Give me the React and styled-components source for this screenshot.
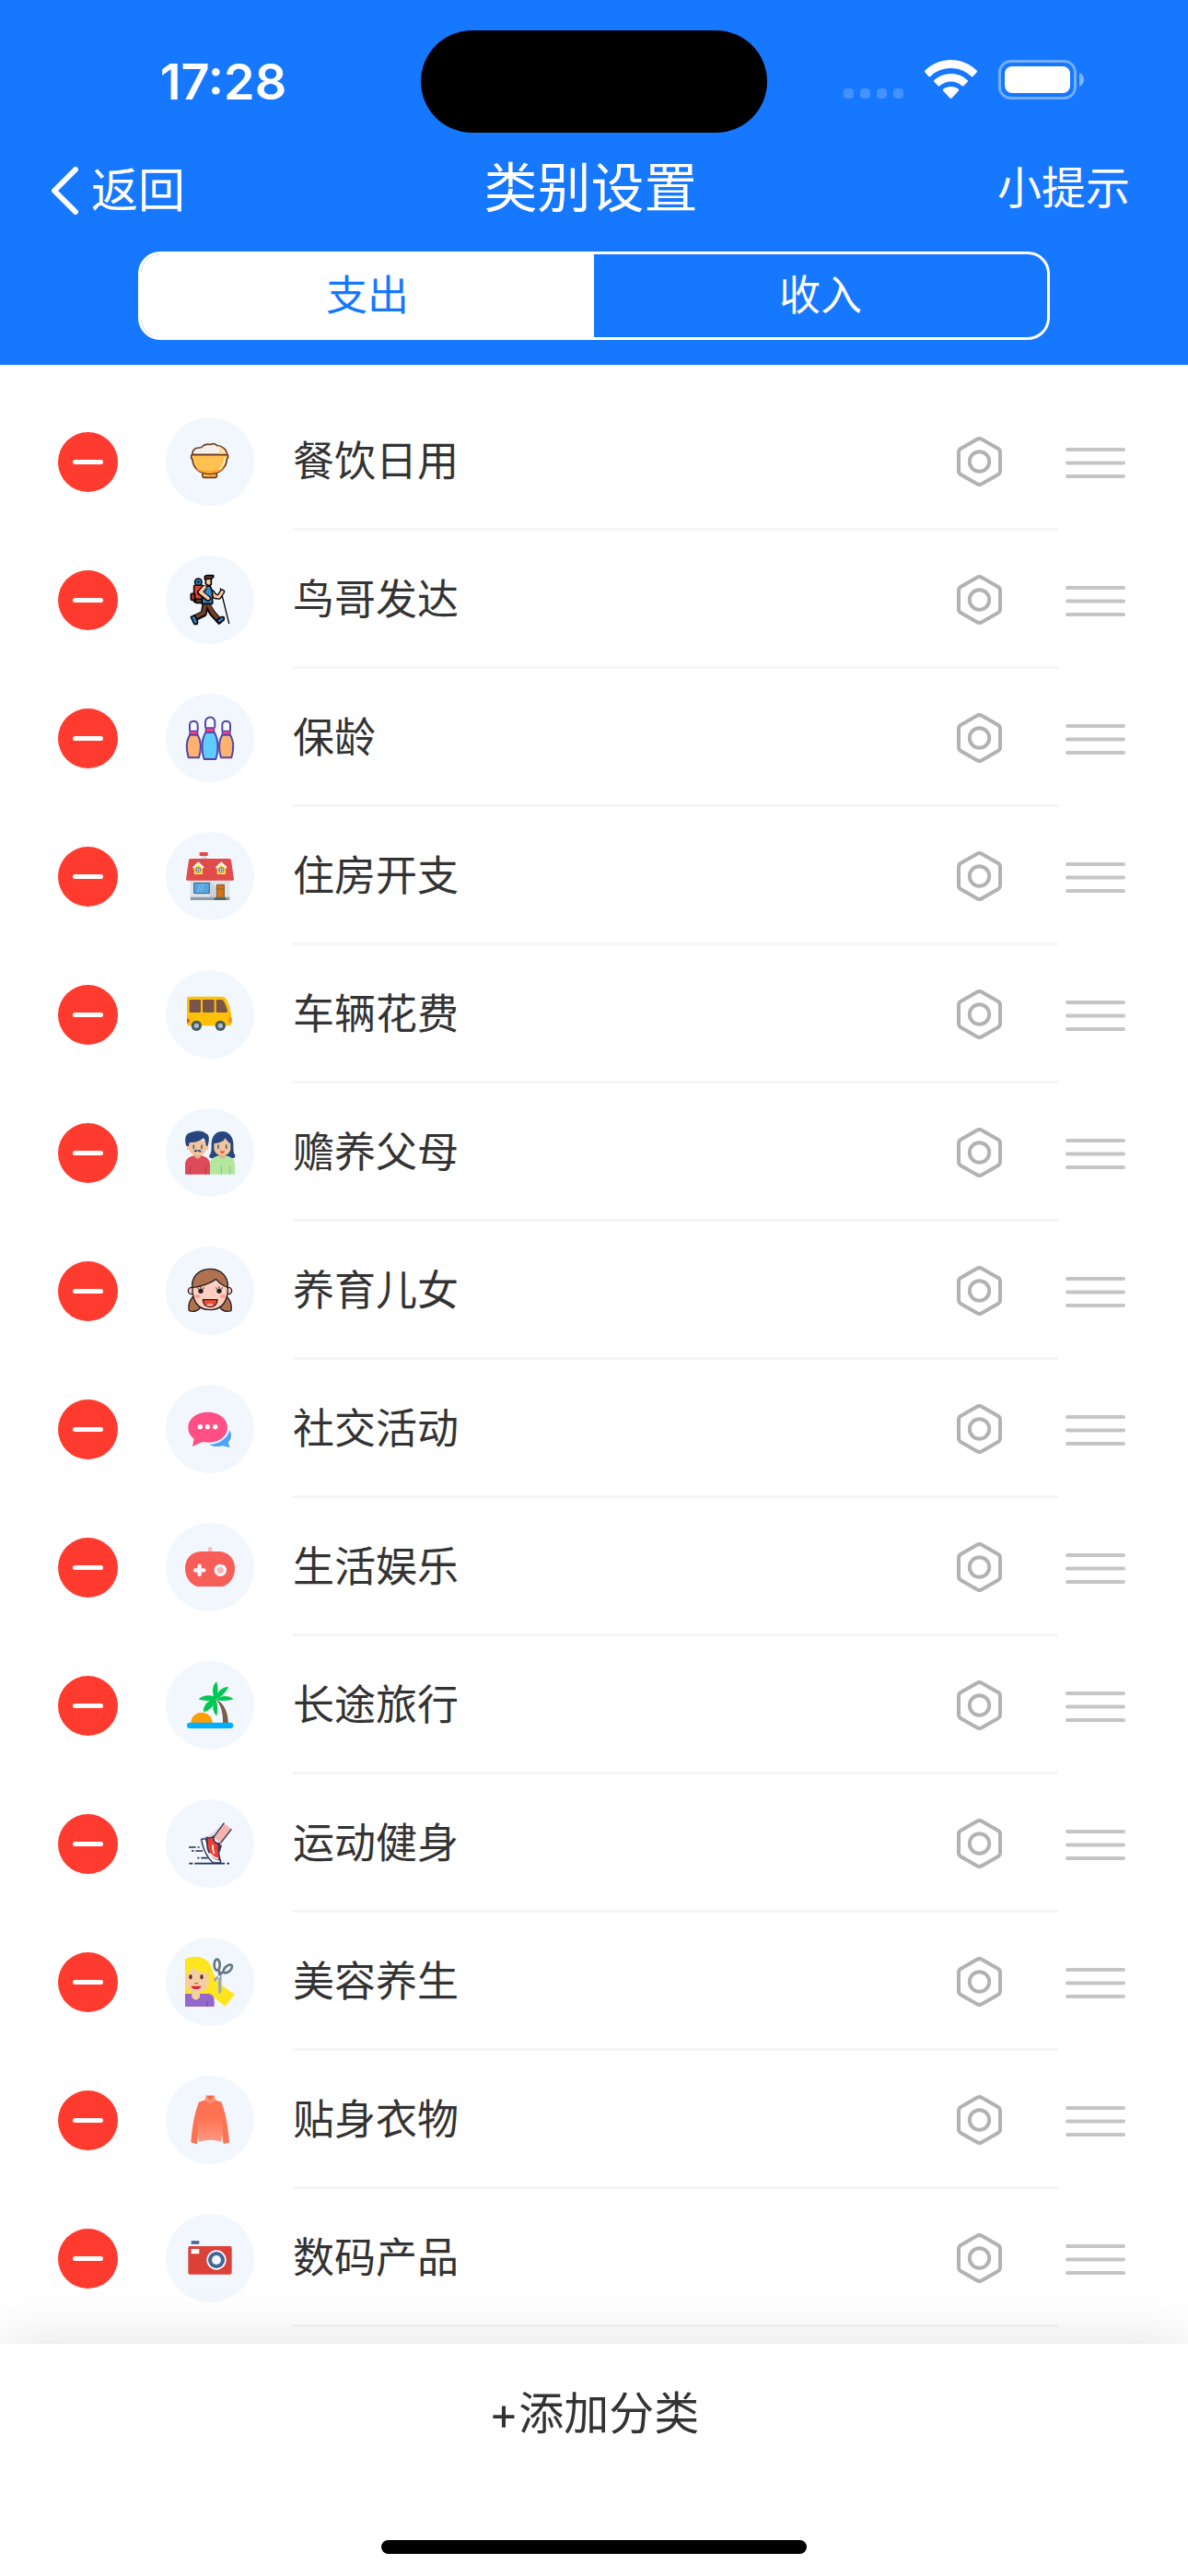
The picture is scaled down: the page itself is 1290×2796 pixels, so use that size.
import { useState } from 'react';
import styled, { createGlobalStyle } from 'styled-components';

const GlobalStyle = createGlobalStyle`
  *, *::before, *::after { box-sizing: border-box; }
  body {
    margin: 0;
    background: #fff;
    color: #333;
    font-family: Inter, "Noto Sans CJK SC", sans-serif;
  }
  button {
    margin: 0;
    padding: 0;
    border: 0;
    background: none;
    color: inherit;
    font: inherit;
    cursor: pointer;
  }
  svg { display: block; }
`;

/* category pictures, all drawn on the 288 x 288 badge grid */

function RiceBowl() {
  return (
    <g stroke="#6d3b20" strokeWidth="5" strokeLinejoin="round">
      <path d="M120 180h46v13q0 3-4 3h-38q-4 0-4-3z" fill="#ffb43c" />
      <path d="M88 122c-3-14 6-24 22-23 9 1 10-9 20-10 8-4 12 1 18-1 8-4 14-1 18 3 18 3 33 14 34 31z" fill="#f5f1ec" />
      <path d="M170 92c14 5 26 16 28 28h-26c3-10 3-20-2-28z" fill="#ffdca0" stroke="none" />
      <path d="M84 122h118q3 10-3 14c-1 30-25 48-56 48-32 0-54-18-56-46-5-4-5-10-3-16z" fill="#ffc14f" />
      <path d="M96 164c20 12 70 14 96-2-10 13-26 20-49 20-22 0-38-6-47-18z" fill="#ffa935" stroke="none" />
      <path d="M193 133c-1 12-3 18-9 25M180 163l-4 4" stroke="#fff" strokeWidth="4" strokeLinecap="round" fill="none" />
      <path d="M112 109h2M126 101h2M140 109h2M152 99h2M127 113h2M160 112h2" stroke="#d8c7b4" strokeWidth="3" />
    </g>
  );
}

function Hiker() {
  return (
    <g stroke="#050505" strokeWidth="5" strokeLinejoin="round" strokeLinecap="round" fill="none">
      <path d="M178 108l28 113" strokeWidth="4" />
      <path d="M128 164l-4 25-28 14M138 164l14 24 22 24" strokeWidth="21" />
      <path d="M128 162l-4 25-28 14M140 162l12 24 20 21" stroke="#70402a" strokeWidth="12" />
      <path d="M82 200l12-6 10 22-2 7h-9z" fill="#3288cc" />
      <path d="M167 210l16-11 7 3-1 8-17 12z" fill="#3288cc" />
      <rect x="92" y="96" width="30" height="56" rx="6" fill="#dc4536" />
      <rect x="82" y="124" width="13" height="21" rx="3" fill="#b93429" />
      <path d="M94 142h26v12h-20z" fill="#70402a" />
      <circle cx="106" cy="86" r="11" fill="#3288cc" />
      <circle cx="106" cy="86" r="3" strokeWidth="3" />
      <path d="M151 120l10 13 12 2 11-17" strokeWidth="17" />
      <path d="M151 120l10 13 12 2 11-17" stroke="#fdc9a0" strokeWidth="9" />
      <path d="M120 102l24-4 8 20v39h-34z" fill="#3288cc" />
      <path d="M124 107l-12 13 26 20" strokeWidth="19" />
      <path d="M126 104l-13 15 25 20" stroke="#fdc9a0" strokeWidth="11" />
      <path d="M130 74h18v20q-3 4-9 4l-9-6z" fill="#fdc9a0" />
      <path d="M127 77v-8q3-5 9-4h19v5l-6 5z" fill="#70402a" />
    </g>
  );
}

function SidePin({ x }) {
  return (
    <g transform={`translate(${x} 0)`}>
      <path d="M10 120v-19a13 12 0 0 1 26 0v19" fill="#f8f9ff" />
      <path d="M10 121h26v13H10z" fill="#f43b86" strokeWidth="4" />
      <path d="M10 134h26c12 20 11 50 4 74H6C-1 184-2 154 10 134z" fill="#ffb26f" />
    </g>
  );
}

function BowlingPins() {
  return (
    <g stroke="#5146a6" strokeWidth="6" strokeLinejoin="round">
      <SidePin x={68} />
      <SidePin x={174} />
      <path d="M129 110V92a15 15 0 0 1 31 0v18" fill="#f8f9ff" />
      <path d="M130 111h28v15h-28z" fill="#f43b86" strokeWidth="4" />
      <path d="M130 126h28c14 22 15 60 5 87h-38c-10-27-9-65 5-87z" fill="#60cbff" />
    </g>
  );
}

function Dormer({ x }) {
  return (
    <g transform={`translate(${x} 0)`}>
      <path d="M-14 114L0 101l14 13v24h-28z" fill="#ffdb3e" />
      <path d="M-17 117L0 101l17 16" fill="none" stroke="#fff" strokeWidth="6" />
      <circle cy="124" r="9" fill="#35454f" />
      <path d="M-9 121H9M-9 127H9M-3 115v18M3 115v18" stroke="#fff" strokeWidth="2" />
    </g>
  );
}

function House() {
  return (
    <g>
      <path d="M116 76h17v14h-17z" fill="#d7dde2" />
      <path d="M110 66h27v12h-27z" fill="#df4b4c" />
      <path d="M80 155h128v58H80z" fill="#dce5ec" />
      <path d="M142 155l20 25v32h-20z" fill="#c8d3db" />
      <path d="M80 212h128v10H80z" fill="#8b9da6" />
      <path d="M80 87h127q5 0 6 5l9 62q0 4-4 4H70q-4 0-4-4l9-62q1-5 5-5z" fill="#e14b4b" />
      <Dormer x={106} />
      <Dormer x={181} />
      <path d="M92 166h50v34H92z" fill="#55a5e2" stroke="#455d6d" strokeWidth="3" />
      <path d="M103 197l10-28M113 197l10-28" stroke="#86c2ef" strokeWidth="3" />
      <path d="M166 172h24v42h-24z" fill="#cf761b" stroke="#8b4a15" strokeWidth="3" />
      <path d="M166 186h24" stroke="#8b4a15" strokeWidth="2" />
      <path d="M160 213h34l4 9h-41z" fill="#53646d" />
    </g>
  );
}

function Bus() {
  return (
    <g>
      <path d="M77 86h106q10 0 15 9c9 18 16 42 16 66v10q0 10-10 10H77q-8 0-8-8V94q0-8 8-8z" fill="#ffc107" />
      <g fill="#795548">
        <rect x="77" y="96" width="37" height="42" rx="4" />
        <rect x="120" y="96" width="38" height="42" rx="4" />
        <path d="M168 96h13q5 0 8 5c5 9 9 20 12 31q1 6-4 6h-29q-4 0-4-4v-34q0-4 4-4z" />
      </g>
      <path d="M69 158h3q5 0 5 6v2q0 6-5 6h-3z" fill="#f63d1c" />
      <rect x="204" y="153" width="11" height="18" rx="5" fill="#ff8a00" />
      <circle cx="100" cy="181" r="17" fill="#455a64" />
      <circle cx="100" cy="181" r="8" fill="#b0bec5" />
      <circle cx="178" cy="181" r="17" fill="#455a64" />
      <circle cx="178" cy="181" r="8" fill="#b0bec5" />
    </g>
  );
}

function Parents() {
  return (
    <g>
      <path d="M148 162c-8 0-8-10-2-14 4-10 2-22 3-36 2-24 16-37 35-37s34 14 36 38c1 14-1 26 3 35 5 5 4 14-3 14-12 3-60 3-72 0z" fill="#26467f" />
      <path d="M63 215v-32q0-20 21-27l12-4h16l12 4q20 7 20 27v32z" fill="#dd4b58" />
      <path d="M144 215v-32q0-20 21-27l11-4h16l12 4q21 7 21 27v32z" fill="#b3e79e" />
      <path d="M79 188v27M130 188v27" stroke="#b83549" strokeWidth="3" />
      <path d="M181 188v27M209 188v27" stroke="#72c3a0" strokeWidth="3" />
      <path d="M93 144h22v12q-11 16-22 0zM173 144h22v12q-11 16-22 0z" fill="#e0b186" />
      <circle cx="75" cy="129" r="7" fill="#f0c59b" />
      <circle cx="133" cy="129" r="7" fill="#f0c59b" />
      <path d="M76 104h56v24c0 18-14 26-28 26s-28-8-28-26z" fill="#f0c59b" />
      <path d="M157 115q30-3 37-18 7 13 17 18v15c0 16-12 24-26 24s-28-8-28-24z" fill="#f0c59b" />
      <path d="M67 123C60 100 62 80 86 77c16-6 36-5 44 5 12 3 13 18 7 40h-6c0-10-2-18-8-25-11 10-28 15-46 14l-2 12z" fill="#26467f" />
      <path d="M91 121v9M117 121v9M171 120v10M197 120v10" stroke="#456276" strokeWidth="5" strokeLinecap="round" />
      <path d="M92 141c2-8 10-6 12-3 3-4 11-4 12 4-6 1-8-1-12-3-4 3-8 4-12 2z" fill="#26467f" />
      <path d="M177 136q8 8 15 0-2 11-8 11t-7-11z" fill="#e64250" />
    </g>
  );
}

function Girl() {
  return (
    <g stroke="#26211f" strokeWidth="4" strokeLinejoin="round">
      <path d="M88 163c-10 12-16 28-12 46 12 4 26 1 36-9zM200 163c10 12 16 28 13 46-12 4-26 1-36-9z" fill="#b07151" />
      <circle cx="84" cy="144" r="11" fill="#ffcfc3" />
      <circle cx="204" cy="144" r="11" fill="#ffcfc3" />
      <path d="M87 130c0-36 25-56 57-56s58 20 58 56c2 44-16 76-58 76s-59-32-57-76z" fill="#ffcfc3" />
      <path d="M86 134c-3-34 21-61 58-61s60 26 58 60q-24-8-38-27-30 21-78 28z" fill="#b07151" />
      <g stroke="none">
        <ellipse cx="114" cy="145" rx="8" ry="8" fill="#26211f" />
        <ellipse cx="174" cy="145" rx="8" ry="8" fill="#26211f" />
        <ellipse cx="103" cy="162" rx="9" ry="6" fill="#ff9c94" />
        <ellipse cx="186" cy="162" rx="9" ry="6" fill="#ff9c94" />
      </g>
      <path d="M106 138l-2-4M114 136v-5M122 138l2-4M166 138l-2-4M174 136v-5M182 138l2-4" strokeLinecap="round" strokeWidth="3" />
      <path d="M121 173h47c0 14-10 24-24 24s-23-10-23-24z" fill="#ef4d2f" />
      <path d="M131 192q13-14 26 0-13 6-26 0z" fill="#ff9c94" stroke="none" />
    </g>
  );
}

function Chat() {
  return (
    <g>
      <path d="M141 195c34-1 60-20 67-47 9 15 5 31-5 40l6 17-22-6c-16 4-35 2-46-4z" fill="#4aa3ff" />
      <path d="M137 89c36 0 64 22 64 50 0 29-27 49-60 49-9 0-16-1-22-2l-32 15 5-25c-12-9-19-21-19-37 0-28 28-50 64-50z" fill="#ff4f86" />
      <g fill="#fff">
        <circle cx="112" cy="137" r="8" />
        <circle cx="136" cy="137" r="8" />
        <circle cx="161" cy="137" r="8" />
      </g>
    </g>
  );
}

function Gamepad() {
  return (
    <g>
      <rect x="138" y="78" width="13" height="25" rx="6" fill="#fbb7b4" />
      <path d="M116 93h56c32 0 53 24 53 55 0 28-16 53-40 59h-82c-24-6-40-31-40-59 0-31 21-55 53-55z" fill="#f65e57" />
      <path d="M110 140v28M96 154h28" stroke="#f2f7fe" strokeWidth="13" strokeLinecap="round" />
      <circle cx="178" cy="154" r="20" fill="#f2f7fe" />
      <circle cx="178" cy="154" r="11" fill="#fbb7b4" />
    </g>
  );
}

function Palm() {
  return (
    <g>
      <path d="M82 202a35 35 0 0 1 70 0z" fill="#ff9d00" />
      <path d="M164 125c24 10 38 36 40 77h-18c1-34-6-58-22-77z" fill="#79604a" />
      <g fill="#00c853">
        <path d="M160 124c-10-20-10-46 6-57 5 18 5 38-1 57z" />
        <path d="M162 124c2-20 18-39 42-41-7 18-22 33-42 41z" />
        <path d="M163 126c14-15 42-17 58-2-18 6-38 7-58 2z" />
        <path d="M167 122c-14-14-44-14-60 2 18 7 40 7 60-2z" />
        <path d="M164 125c-22-2-44 18-41 41 20-6 34-20 41-41z" />
        <path d="M163 124c-14 18-11 42 3 55 4-18 4-38-3-55z" />
      </g>
      <rect x="69" y="200" width="151" height="19" rx="9" fill="#00b0ff" />
    </g>
  );
}

function RunningShoe() {
  return (
    <g strokeLinejoin="round">
      <path d="M184 75l-28 34-18 10-26 8q-2 14 10 38z" fill="#d9d2d4" />
      <path d="M190 78l24 19-35 46-23-20z" fill="#f4b3ac" />
      <path d="M190 77l-33 44M214 97l-35 45" stroke="#22305a" strokeWidth="4" />
      <path d="M116 131q8-5 15 0l12 45 36 24-1 7h-24c-20-17-31-40-38-76z" fill="#f8f8fb" stroke="#22305a" strokeWidth="4" />
      <path d="M132 124q16 5 25-4c-4 16 3 24 19 24-5 18-3 38 1 53-20 0-38-19-42-42-1-14 5-20-3-31z" fill="#f13c32" stroke="#22305a" strokeWidth="4" />
      <path d="M153 150q-1 13 4 25M144 177q10 13 25 17" stroke="#fff" strokeWidth="5" fill="none" strokeLinecap="round" />
      <path d="M170 148l10 6M169 159l11-2M181 148l-6 22" stroke="#22305a" strokeWidth="4" />
      <path d="M75 156h23M104 156h6M84 168h8M97 168h24M103 191h6M115 191h22M76 209h12M94 209h98M199 209h8" stroke="#22305a" strokeWidth="5" />
    </g>
  );
}

function Haircut() {
  return (
    <g>
      <path d="M63 70C98 53 136 64 148 95c9 24 12 50 77 89l-31 40c-20-12-40-36-60-41H63z" fill="#ffe51f" />
      <path d="M63 183h77q18 2 18 24v18H63z" fill="#9367cc" />
      <path d="M135 207v18" stroke="#7450a8" strokeWidth="4" />
      <path d="M85 174h26v20q-13 18-26 0z" fill="#f2cfa0" />
      <path d="M66 120q17-8 20-25 16 20 54 20v30c0 20-16 34-38 34-20 0-36-12-36-32z" fill="#f2cfa0" />
      <ellipse cx="81" cy="128" rx="5" ry="8" fill="#68251d" />
      <ellipse cx="117" cy="128" rx="5" ry="8" fill="#68251d" />
      <path d="M93 149h13" stroke="#c56838" strokeWidth="4" />
      <path d="M82 158h34q-4 10-17 10t-17-10z" fill="#df2144" />
      <path d="M170 112l12 8-1 56q-3 7-9 7zM171 123l-16 12 5 10 18-20z" fill="#99aab5" />
      <g fill="none" stroke="#66757f" strokeWidth="8">
        <ellipse cx="167" cy="89" rx="9" ry="18" />
        <ellipse cx="202" cy="102" rx="9" ry="17" transform="rotate(48 202 102)" />
        <path d="M173 106l3 13 12-7" />
      </g>
    </g>
  );
}

function Sweater() {
  return (
    <g>
      <linearGradient id="sweater" x1="0" y1="0" x2="0" y2="1">
        <stop offset="0.4" stopColor="#fd7251" />
        <stop offset="1" stopColor="#ff9880" />
      </linearGradient>
      <path d="M108 86l18-6h38l17 6c14 34 22 80 26 131l-19 6-6-40H106l-4 40-20-6c4-51 12-97 26-131z" fill="#fd7251" />
      <path d="M108 86l18-6h38l17 6c5 38 4 60 5 96q-5 15-5 33-37-12-73 0-3-18-4-33c0-36 0-58 4-96z" fill="url(#sweater)" />
      <path d="M132 64h26l5 16-18 11-18-11z" fill="#ff9278" />
      <path d="M134 66h22l-11 17z" fill="#f46645" />
    </g>
  );
}

function Camera() {
  return (
    <g>
      <rect x="83" y="88" width="26" height="10" rx="1" fill="#3f6798" />
      <rect x="73" y="105" width="142" height="92" rx="6" fill="#dc4138" />
      <rect x="83" y="114" width="26" height="16" rx="1" fill="#fff" />
      <circle cx="165" cy="150" r="32" fill="#fff" />
      <circle cx="165" cy="150" r="27" fill="#3f6798" />
      <circle cx="165" cy="150" r="15" fill="#f2f7fe" />
    </g>
  );
}

const categories = [
  { id: 1, name: '餐饮日用', Icon: RiceBowl },
  { id: 2, name: '鸟哥发达', Icon: Hiker },
  { id: 3, name: '保龄', Icon: BowlingPins },
  { id: 4, name: '住房开支', Icon: House },
  { id: 5, name: '车辆花费', Icon: Bus },
  { id: 6, name: '赡养父母', Icon: Parents },
  { id: 7, name: '养育儿女', Icon: Girl },
  { id: 8, name: '社交活动', Icon: Chat },
  { id: 9, name: '生活娱乐', Icon: Gamepad },
  { id: 10, name: '长途旅行', Icon: Palm },
  { id: 11, name: '运动健身', Icon: RunningShoe },
  { id: 12, name: '美容养生', Icon: Haircut },
  { id: 13, name: '贴身衣物', Icon: Sweater },
  { id: 14, name: '数码产品', Icon: Camera },
];

const Page = styled.div`
  display: flex;
  flex-direction: column;
  min-height: 100vh;
`;

const Header = styled.header`
  padding: 33px 0 27px;
  background: #1677ff;
  color: #fff;
`;

const StatusBar = styled.div`
  display: grid;
  grid-template-columns: 1fr 376px 1fr;
  align-items: center;
  justify-items: center;
`;

const Clock = styled.time`
  padding-left: 28px;
  font-size: 54px;
  font-weight: 600;
  line-height: 64px;
`;

const Island = styled.div`
  width: 100%;
  height: 111px;
  border-radius: 56px;
  background: #000;
`;

const StatusIcons = styled.div`
  display: flex;
  align-items: center;
  gap: 23px;
  padding: 0 30px 4px 0;
`;

const NavBar = styled.nav`
  display: grid;
  grid-template-columns: 1fr auto 1fr;
  align-items: center;
  height: 120px;
  padding: 0 63px 0 56px;
`;

const NavButton = styled.button`
  display: flex;
  align-items: center;
  gap: 11px;
  justify-self: ${(p) => (p.$end ? 'end' : 'start')};
  padding-top: ${(p) => (p.$end ? '0' : '6px')};
  font-size: ${(p) => (p.$end ? '48px' : '51px')};
  line-height: 72px;
`;

const Title = styled.h1`
  margin: 0;
  font-size: 58px;
  font-weight: 400;
  line-height: 72px;
`;

const Segments = styled.div`
  display: flex;
  height: 96px;
  margin: 9px 150px 0;
  border: 3px solid #fff;
  border-radius: 24px;
  overflow: hidden;
`;

const Segment = styled.button`
  flex: 1;
  background: ${(p) => (p.$active ? '#fff' : 'transparent')};
  color: ${(p) => (p.$active ? '#1677ff' : '#fff')};
  font-size: 45px;
  line-height: 60px;
`;

const List = styled.ul`
  flex: 1;
  margin: 0;
  padding: 30px 0 18px;
  list-style: none;
`;

const Row = styled.li`
  display: flex;
  align-items: center;
  height: 150px;
  padding: 0 68px 0 63px;
`;

const DeleteButton = styled.button`
  display: grid;
  place-items: center;
  width: 65px;
  height: 65px;
  border-radius: 50%;
  background: #ff3b30;

  &::before {
    content: '';
    width: 33px;
    height: 5px;
    border-radius: 3px;
    background: #fff;
  }
`;

const Badge = styled.div`
  width: 96px;
  height: 96px;
  margin: 0 42px 0 52px;
  border-radius: 50%;
  background: #f2f7fe;
`;

const RowBody = styled.div`
  display: flex;
  flex: 1;
  align-items: center;
  justify-content: space-between;
  height: 100%;
  padding-right: 61px;
  box-shadow: inset 0 -3px #f5f5f5;
`;

const Name = styled.span`
  font-size: 45px;
  line-height: 60px;
`;

const GripButton = styled.button`
  margin-left: 8px;
  cursor: grab;
`;

const Footer = styled.footer`
  position: sticky;
  bottom: 0;
  display: flex;
  flex-direction: column;
  align-items: center;
  justify-content: space-between;
  height: 252px;
  padding: 40px 0 24px;
  background: #fff;
  box-shadow: 0 0 60px rgba(0, 0, 0, 0.12);
`;

const AddButton = styled.button`
  font-size: 49px;
  line-height: 72px;
`;

const HomeIndicator = styled.div`
  width: 462px;
  height: 15px;
  border-radius: 8px;
  background: #000;
`;

function SignalIcon() {
  return (
    <svg width="65" height="43" viewBox="0 0 65 43" fill="#fff" fillOpacity="0.2">
      {[0, 18, 36, 54].map((x) => (
        <rect key={x} x={x} y="31" width="11" height="11" rx="4" />
      ))}
    </svg>
  );
}

function WifiIcon() {
  return (
    <svg width="57" height="43" viewBox="0 0 57 43" fill="#fff">
      <path d="M28.500 0C39.500 0 49.500 4.500 56.500 11.500Q57.500 12.500 56.500 13.500L52.500 18Q51.500 18.700 50.500 17.700C44.500 12 37 9 28.500 9S12.500 12 6.500 17.700Q5.500 18.700 4.500 18L.5 13.500Q-.5 12.500.5 11.500C7.500 4.500 17.500 0 28.500 0z" />
      <path d="M28.500 15C35.500 15 41.500 17.500 46.500 22Q47.500 23 46.500 24L42.300 28.200Q41.300 29 40.300 28C37 25 33 23.500 28.500 23.500S20 25 16.700 28Q15.700 29 14.700 28.200L10.500 24Q9.500 23 10.500 22C15.500 17.500 21.500 15 28.500 15z" />
      <path d="M28.500 29C32 29 34.500 30 36.800 31.800Q37.800 32.700 36.800 33.700L29.500 41.500Q28.500 42.300 27.500 41.500L20.200 33.700Q19.200 32.700 20.200 31.800C22.500 30 25 29 28.500 29z" />
    </svg>
  );
}

function BatteryIcon() {
  return (
    <svg width="93" height="43" viewBox="0 0 93 43">
      <rect x="1.500" y="1.500" width="82" height="40" rx="12" fill="none" stroke="#fff" strokeOpacity="0.4" strokeWidth="3" />
      <rect x="7" y="7" width="71" height="29" rx="8" fill="#fff" />
      <path d="M88 14q5 2 5 7.500T88 29z" fill="#fff" fillOpacity="0.45" />
    </svg>
  );
}

function BackIcon() {
  return (
    <svg width="32" height="52" viewBox="0 0 32 52" fill="none" stroke="#fff" strokeWidth="6" strokeLinecap="round" strokeLinejoin="round">
      <path d="M26 3L3 26l23 23" />
    </svg>
  );
}

function NutIcon() {
  return (
    <svg width="49" height="54" viewBox="0 0 49 54" fill="none" stroke="#b2b2b2" strokeWidth="4">
      <path d="M22 2.700Q24.500 1.300 27 2.700L44.500 12.800Q47 14.200 47 17V37Q47 39.800 44.500 41.200L27 51.300Q24.500 52.700 22 51.300L4.500 41.200Q2 39.800 2 37V17Q2 14.200 4.500 12.800Z" />
      <circle cx="24.500" cy="27" r="10.700" />
    </svg>
  );
}

function GripIcon() {
  return (
    <svg width="65" height="36" viewBox="0 0 65 36" stroke="#c5c5c7" strokeWidth="4" strokeLinecap="round">
      <path d="M2 5h61M2 19.500h61M2 34h61" />
    </svg>
  );
}

function CategoryRow({ item }) {
  const { name, Icon } = item;
  return (
    <Row>
      <DeleteButton type="button" aria-label={`删除${name}`} />
      <Badge>
        <svg width="96" height="96" viewBox="0 0 288 288" aria-hidden="true">
          <Icon />
        </svg>
      </Badge>
      <RowBody>
        <Name>{name}</Name>
        <button type="button" aria-label={`设置${name}`}>
          <NutIcon />
        </button>
      </RowBody>
      <GripButton type="button" aria-label={`排序${name}`}>
        <GripIcon />
      </GripButton>
    </Row>
  );
}

export default function App() {
  const [tab, setTab] = useState('支出');

  return (
    <Page>
      <GlobalStyle />
      <Header>
        <StatusBar>
          <Clock>17:28</Clock>
          <Island />
          <StatusIcons>
            <SignalIcon />
            <WifiIcon />
            <BatteryIcon />
          </StatusIcons>
        </StatusBar>
        <NavBar>
          <NavButton type="button">
            <BackIcon />
            返回
          </NavButton>
          <Title>类别设置</Title>
          <NavButton type="button" $end>小提示</NavButton>
        </NavBar>
        <Segments>
          {['支出', '收入'].map((label) => (
            <Segment
              key={label}
              type="button"
              $active={tab === label}
              aria-pressed={tab === label}
              onClick={() => setTab(label)}
            >
              {label}
            </Segment>
          ))}
        </Segments>
      </Header>
      <List>
        {categories.map((item) => (
          <CategoryRow key={item.id} item={item} />
        ))}
      </List>
      <Footer>
        <AddButton type="button">+添加分类</AddButton>
        <HomeIndicator />
      </Footer>
    </Page>
  );
}
